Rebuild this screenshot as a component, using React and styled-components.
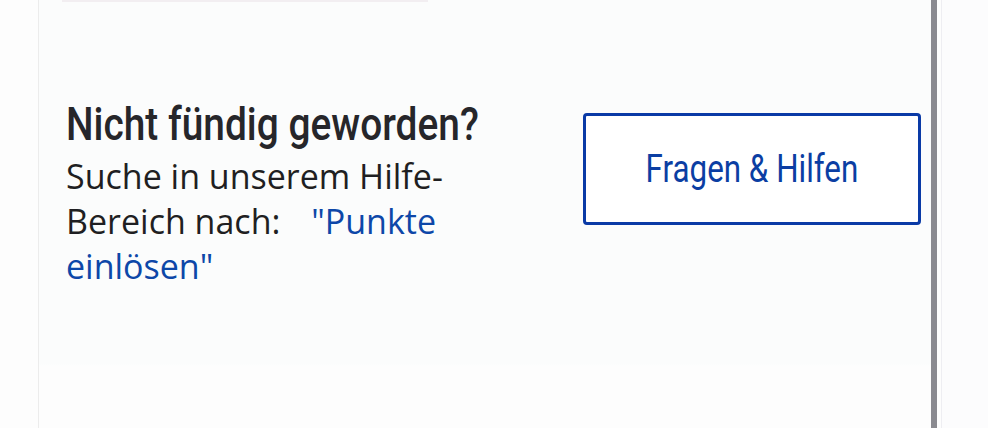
import React from "react";
import styled, { createGlobalStyle } from "styled-components";

const Global = createGlobalStyle`
  html, body { margin: 0; padding: 0; background: #fdfdfd; }
  body { width: 988px; height: 428px; overflow: hidden; }
`;

const Page = styled.div`
  display: flex;
  height: 428px;
  background: #fdfdfd;
`;

const Gutter = styled.div`
  width: 38px;
  flex-shrink: 0;
  border-right: 1px solid #ececec;
`;

const Panel = styled.div`
  flex: 1;
  display: flex;
  flex-direction: column;
  background: linear-gradient(#fbfcfc 0, #fbfcfc 364px, #fdfdfd 366px);
`;

const TopStrip = styled.div`
  height: 2px;
  width: 366px;
  margin-left: 23px;
  background: #f2eef1;
`;

const Row = styled.div`
  display: flex;
  justify-content: space-between;
  align-items: flex-start;
  padding: 93px 10px 0 27px;
`;

const TextCol = styled.div`
  display: flex;
  flex-direction: column;
`;

const Title = styled.h2`
  margin: 0;
  font-family: "Roboto", "Noto Sans", sans-serif;
  font-weight: 500;
  font-size: 46px;
  line-height: 59px;
  color: #26262a;
  white-space: nowrap;
`;

/* stands in for the condensed brand face */
const Narrow = styled.span`
  display: inline-block;
  transform: scaleX(${(p) => p.$x});
  transform-origin: ${(p) => p.$origin || "left center"};
`;

const Desc = styled.p`
  margin: 0;
  font-family: "Open Sans", "Noto Sans", sans-serif;
  font-size: 34px;
  line-height: 45px;
  color: #1f1f22;
  white-space: nowrap;
`;

const Link = styled.a`
  color: #0d47a8;
  text-decoration: none;
  margin-left: ${(p) => (p.$gap ? "22px" : "0")};
`;

const HelpButton = styled.button`
  width: 338px;
  height: 112px;
  margin-top: 18px;
  padding: 0;
  background: #ffffff;
  border: 3px solid #0a3aa6;
  border-radius: 4px;
  font-family: "Roboto", "Noto Sans", sans-serif;
  font-weight: 400;
  font-size: 38px;
  color: #0b3ea3;
  cursor: pointer;
`;

const Scrollbar = styled.div`
  width: 6px;
  flex-shrink: 0;
  background: #8a8a90;
`;

const RightEdge = styled.div`
  width: 46px;
  flex-shrink: 0;
  margin-left: 4px;
  border-left: 1px solid #eeeef2;
  background: #fcfcfd;
`;

export default function App() {
  return (
    <>
      <Global />
      <Page>
        <Gutter />
        <Panel>
          <TopStrip />
          <Row>
            <TextCol>
              <Title>
                <Narrow $x={0.845}>Nicht fündig geworden?</Narrow>
              </Title>
              <Desc>
                Suche in unserem Hilfe-
                <br />
                Bereich nach: <Link href="#" $gap>"Punkte</Link>
                <br />
                <Link href="#">einlösen"</Link>
              </Desc>
            </TextCol>
            <HelpButton>
              <Narrow $x={0.825} $origin="center">Fragen &amp; Hilfen</Narrow>
            </HelpButton>
          </Row>
        </Panel>
        <Scrollbar />
        <RightEdge />
      </Page>
    </>
  );
}
